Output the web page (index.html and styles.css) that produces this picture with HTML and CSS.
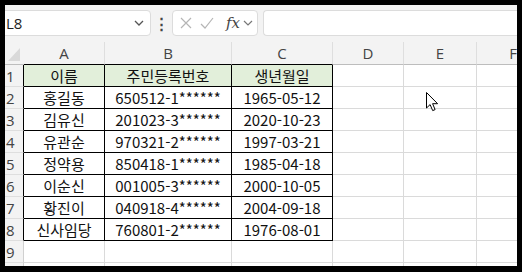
FILE: index.html
```html
<!DOCTYPE html>
<html lang="ko">
<head>
<meta charset="utf-8">
<link rel="stylesheet" href="styles.css">
</head>
<body>
<div class="frame">
  <div class="toolbar">
    <div class="namebox">
      <span class="ref">L8</span>
      <svg class="chev" width="10" height="6" viewBox="0 0 10 6"><path d="M1 1l4 4 4-4" fill="none" stroke="#555" stroke-width="1.3"/></svg>
    </div>
    <div class="dots">⋮</div>
    <div class="fnbox">
      <svg width="14" height="14" viewBox="0 0 14 14"><path d="M2 2l10 10M12 2L2 12" stroke="#b5b5b5" stroke-width="1.2"/></svg>
      <svg width="14" height="14" viewBox="0 0 14 14"><path d="M1 8l4 4 8-10" fill="none" stroke="#b5b5b5" stroke-width="1.2"/></svg>
      <span class="fx">fx</span>
      <svg width="10" height="6" viewBox="0 0 10 6"><path d="M1 1l4 4 4-4" fill="none" stroke="#777" stroke-width="1.2"/></svg>
    </div>
    <div class="formula"></div>
  </div>
  <div class="sheet">
    <div class="corner"><span class="tri"></span></div>
    <div class="ch tb">A</div><div class="ch tb">B</div><div class="ch tb">C</div><div class="ch">D</div><div class="ch">E</div><div class="ch">F</div>

    <div class="rh tr">1</div><div class="c t hd">이름</div><div class="c t hd">주민등록번호</div><div class="c t hd">생년월일</div><div class="c"></div><div class="c"></div><div class="c"></div>
    <div class="rh tr">2</div><div class="c t">홍길동</div><div class="c t">650512-1******</div><div class="c t">1965-05-12</div><div class="c"></div><div class="c"></div><div class="c"></div>
    <div class="rh tr">3</div><div class="c t">김유신</div><div class="c t">201023-3******</div><div class="c t">2020-10-23</div><div class="c"></div><div class="c"></div><div class="c"></div>
    <div class="rh tr">4</div><div class="c t">유관순</div><div class="c t">970321-2******</div><div class="c t">1997-03-21</div><div class="c"></div><div class="c"></div><div class="c"></div>
    <div class="rh tr">5</div><div class="c t">정약용</div><div class="c t">850418-1******</div><div class="c t">1985-04-18</div><div class="c"></div><div class="c"></div><div class="c"></div>
    <div class="rh tr">6</div><div class="c t">이순신</div><div class="c t">001005-3******</div><div class="c t">2000-10-05</div><div class="c"></div><div class="c"></div><div class="c"></div>
    <div class="rh tr">7</div><div class="c t">황진이</div><div class="c t">040918-4******</div><div class="c t">2004-09-18</div><div class="c"></div><div class="c"></div><div class="c"></div>
    <div class="rh tr">8</div><div class="c t">신사임당</div><div class="c t">760801-2******</div><div class="c t">1976-08-01</div><div class="c"></div><div class="c"></div><div class="c"></div>
    <div class="rh">9</div><div class="c"></div><div class="c"></div><div class="c"></div><div class="c"></div><div class="c"></div><div class="c"></div>
    <div class="rh"></div><div class="c"></div><div class="c"></div><div class="c"></div><div class="c"></div><div class="c"></div><div class="c"></div>
  </div>
  <svg class="cursor" width="14" height="20" viewBox="0 0 14 20"><path d="M0.5 0.5v15.5l3.6-3.4 2.6 6 2.4-1-2.5-5.9h5z" fill="#fff" stroke="#000" stroke-width="1" stroke-linejoin="round"/></svg>
</div>
</body>
</html>
```
FILE: styles.css
```css
* { box-sizing: border-box; }
html, body { margin: 0; padding: 0; background: #000; }
body { width: 522px; height: 272px; overflow: hidden; }
.frame {
  position: relative;
  margin: 5px 0 0 5px;
  width: 512px;
  height: 261px;
  background: #f3f3f3;
  overflow: hidden;
  font-family: "Noto Sans", "Noto Sans CJK KR", sans-serif;
}
.toolbar {
  display: flex;
  align-items: center;
  height: 37px;
  padding-bottom: 1px;
}
.namebox {
  margin-left: -6px;
  width: 152px;
  height: 26px;
  background: #fff;
  border: 1px solid #dcdcdc;
  border-radius: 4px;
  display: flex;
  align-items: center;
  justify-content: space-between;
  padding: 0 6px 0 6px;
}
.ref { font-size: 15px; color: #222; font-family: "Open Sans", sans-serif; }
.dots { width: 21px; text-align: center; font-size: 15px; color: #444; font-weight: bold; }
.fnbox {
  width: 86px;
  height: 26px;
  background: #fff;
  border: 1px solid #dcdcdc;
  border-radius: 4px;
  display: flex;
  align-items: center;
  gap: 7px;
  padding: 0 4px 0 6px;
}
.fx { font-family: "DejaVu Serif", "Liberation Serif", serif; font-style: italic; font-size: 15px; color: #444; margin-left: 5px; margin-right: -4px; }
.formula {
  margin-left: 5px;
  flex: 1;
  height: 26px;
  background: #fff;
  border: 1px solid #dcdcdc;
  border-right: none;
  border-radius: 4px 0 0 4px;
}
.sheet {
  display: grid;
  grid-template-columns: 19px 81px 127px 101px 71px 73px 73px;
  grid-template-rows: 23px;
  grid-auto-rows: 22px;
  background: #fff;
}
.corner { background: #f3f3f3; position: relative; border-bottom: 1px solid #bdbdbd; }
.tri {
  position: absolute;
  right: 4px; bottom: 3px;
  width: 0; height: 0;
  border-left: 12px solid transparent;
  border-bottom: 13px solid #d9d9d9;
}
.ch {
  background: #f3f3f3;
  border-bottom: 1px solid #bdbdbd;
  border-right: 1px solid #dedede;
  display: flex; align-items: center; justify-content: center;
  font-size: 15px; color: #444;
  font-family: "Open Sans", sans-serif;
}
.rh {
  background: #f3f3f3;
  border-right: 1px solid #d0d0d0;
  border-bottom: 1px solid #dedede;
  font-size: 15px; color: #444;
  font-family: "Open Sans", sans-serif;
  display: flex; align-items: center;
  padding-left: 1px;
  overflow: hidden;
}
.rh.tr { border-right-color: #000; }
.c {
  border-right: 1px solid #dadada;
  border-bottom: 1px solid #dadada;
  display: flex; align-items: center; justify-content: center;
  font-size: 15px; color: #111;
  font-family: "Noto Sans CJK KR", sans-serif;
  white-space: nowrap;
}
.c.t { border-right-color: #000; border-bottom-color: #000; }
.c.hd { background: #e2efda; }
.ch.tb { border-bottom-color: #000; }
.cursor { position: absolute; left: 421px; top: 87px; }
```
